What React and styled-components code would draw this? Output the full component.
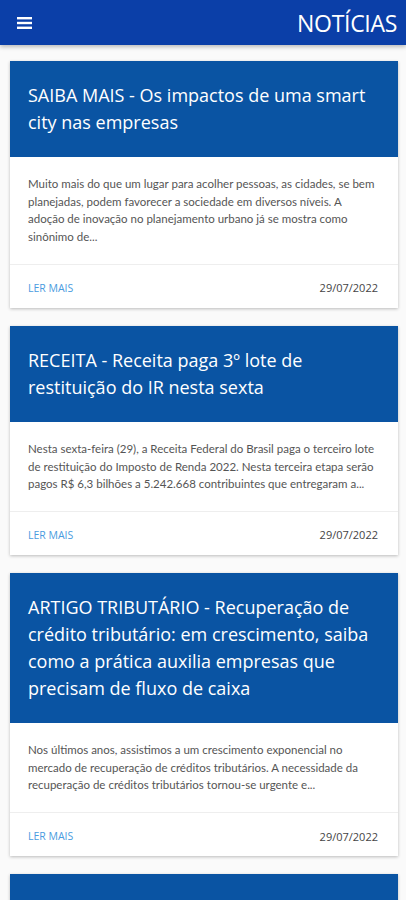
import React from "react";
import styled, { createGlobalStyle } from "styled-components";

const GlobalStyle = createGlobalStyle`
  html, body {
    margin: 0;
    padding: 0;
    background: #fafafa;
    font-family: "Open Sans", "Noto Sans", sans-serif;
  }
  * { box-sizing: border-box; }
`;

const news = [
  {
    id: 1,
    title: "SAIBA MAIS - Os impactos de uma smart city nas empresas",
    summary:
      "Muito mais do que um lugar para acolher pessoas, as cidades, se bem planejadas, podem favorecer a sociedade em diversos níveis. A adoção de inovação no planejamento urbano já se mostra como sinônimo de...",
    date: "29/07/2022",
  },
  {
    id: 2,
    title: "RECEITA - Receita paga 3º lote de restituição do IR nesta sexta",
    summary:
      "Nesta sexta-feira (29), a Receita Federal do Brasil paga o terceiro lote de restituição do Imposto de Renda 2022. Nesta terceira etapa serão pagos R$ 6,3 bilhões a 5.242.668 contribuintes que entregaram a...",
    date: "29/07/2022",
  },
  {
    id: 3,
    title:
      "ARTIGO TRIBUTÁRIO - Recuperação de crédito tributário: em crescimento, saiba como a prática auxilia empresas que precisam de fluxo de caixa",
    summary:
      "Nos últimos anos, assistimos a um crescimento exponencial no mercado de recuperação de créditos tributários. A necessidade da recuperação de créditos tributários tornou-se urgente e...",
    date: "29/07/2022",
  },
  {
    id: 4,
    title: "SIMPLES NACIONAL - Prazo de adesão é prorrogado até setembro",
    summary:
      "Empresas optantes terão mais tempo para regularizar a situação junto à Receita Federal...",
    date: "28/07/2022",
  },
];

const App = () => {
  return (
    <>
      <GlobalStyle />
      <Page>
        <Toolbar>
          <MenuButton aria-label="menu">
            <svg width="15" height="12" viewBox="0 0 15 12">
              <rect x="0" y="0" width="15" height="2.4" fill="#fff" />
              <rect x="0" y="4.8" width="15" height="2.4" fill="#fff" />
              <rect x="0" y="9.6" width="15" height="2.4" fill="#fff" />
            </svg>
          </MenuButton>
          <PageTitle>NOTÍCIAS</PageTitle>
        </Toolbar>
        <List>
          {news.map((item) => (
            <Card key={item.id}>
              <CardHead>
                <h2>{item.title}</h2>
              </CardHead>
              <CardBody>
                <p>{item.summary}</p>
              </CardBody>
              <CardFooter>
                <ReadMore href="#">LER MAIS</ReadMore>
                <DateText>{item.date}</DateText>
              </CardFooter>
            </Card>
          ))}
        </List>
      </Page>
    </>
  );
};

const Page = styled.div`
  min-height: 100vh;
  background: #fafafa;
`;

const Toolbar = styled.header`
  height: 45px;
  background: #0b3fa8;
  display: flex;
  align-items: center;
  justify-content: space-between;
  padding: 0 9px 0 17px;
  box-shadow: 0 2px 4px rgba(0, 0, 0, 0.25);
`;

const MenuButton = styled.button`
  background: none;
  border: 0;
  padding: 0;
  display: flex;
`;

const PageTitle = styled.h1`
  margin: 0;
  color: #fff;
  font-size: 23px;
  font-weight: 400;
  letter-spacing: -0.3px;
`;

const List = styled.main`
  display: flex;
  flex-direction: column;
  gap: 18px;
  padding: 16px 8px 16px 10px;
`;

const Card = styled.article`
  background: #fff;
  box-shadow: 0 1px 3px rgba(0, 0, 0, 0.25);
`;

const CardHead = styled.div`
  background: #0a54a3;
  padding: 21px 18px;

  h2 {
    margin: 0;
    color: #fff;
    font-size: 18px;
    line-height: 27px;
    font-weight: 400;
  }
`;

const CardBody = styled.div`
  padding: 18px 18px;
  border-bottom: 1px solid #eeeeee;

  p {
    margin: 0;
    color: #555;
    font-family: Lato, "Open Sans", sans-serif;
    font-size: 11.5px;
    line-height: 17.7px;
  }
`;

const CardFooter = styled.div`
  height: 43px;
  display: flex;
  align-items: center;
  justify-content: space-between;
  padding: 3px 20px 0 18px;
`;

const ReadMore = styled.a`
  color: #4a9be0;
  font-size: 10.5px;
  text-decoration: none;
`;

const DateText = styled.span`
  color: #444;
  font-size: 11px;
`;

export default App;
